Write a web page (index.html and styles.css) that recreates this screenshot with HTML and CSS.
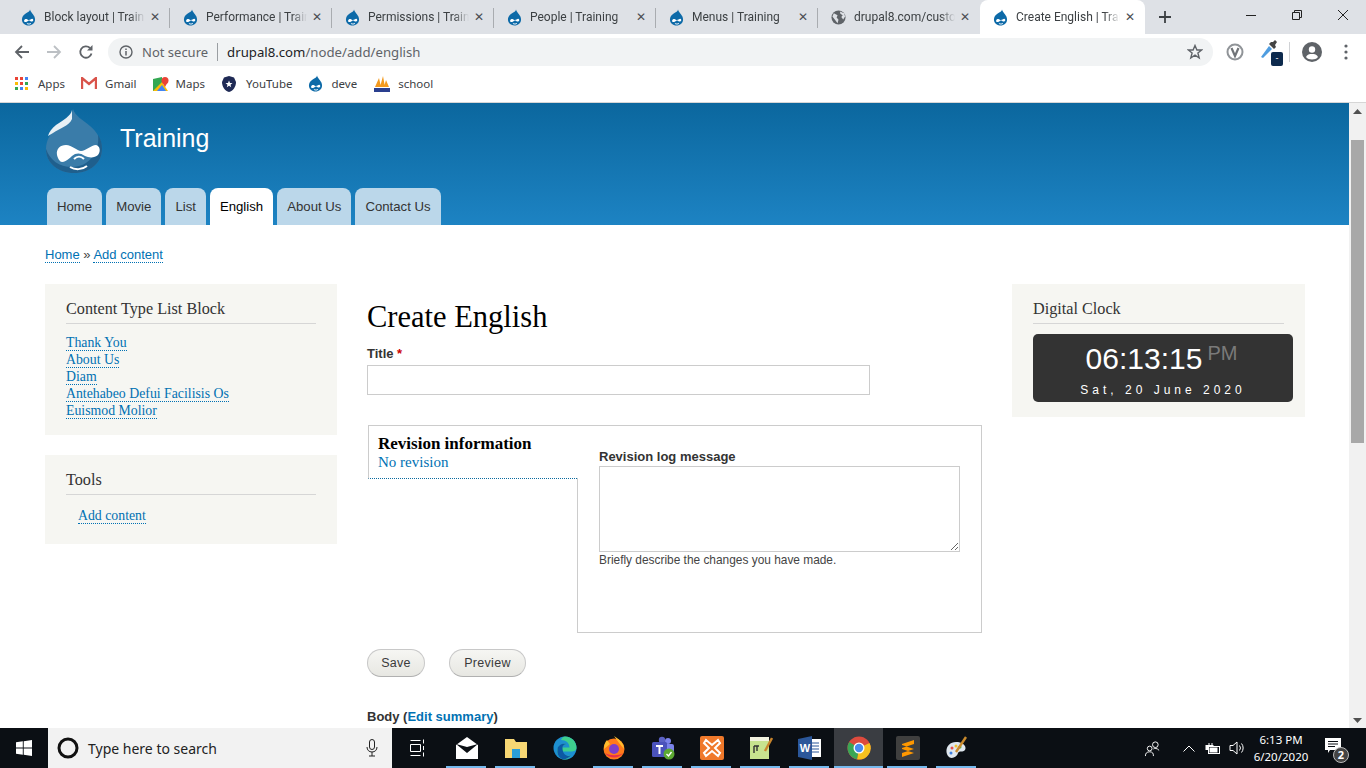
FILE: index.html
```html
<!DOCTYPE html>
<html lang="en">
<head>
<meta charset="utf-8">
<title>Create English | Training</title>
<link rel="stylesheet" href="styles.css">
</head>
<body>
<svg class="defs" width="0" height="0" aria-hidden="true">
  <defs>
    <symbol id="drop" viewBox="0 0 16 18">
      <path d="M9.6 .5C9.5 2.6 7.3 3.2 5 4.8 2.6 6.4 1 8.500 1 11.100 1 14.800 4.100 17.500 8 17.500S15 14.800 15 11.100C15 6.500 10.800 4.700 9.600 .5Z" fill="#0d6aa8"/>
      <path d="M3.300 12.600C3.300 11 4.800 10.300 5.800 10.500 6.800 10.700 7.600 11.700 8.500 11.700 9.600 11.700 10.800 10.300 12 10.300 13 10.300 13.200 11.500 13 12.200 12.700 13.200 11.500 13.600 10.500 13.200 9.800 12.900 9.300 12.300 8.300 12.300 7.300 12.300 6.800 13.800 5.300 13.800 4.200 13.800 3.300 13.500 3.300 12.600Z" fill="#fff"/>
      <path d="M6.300 15.300C7.500 16.200 9.500 16.200 10.600 15.300" stroke="#fff" fill="none"/>
    </symbol>
  </defs>
</svg>
<div class="screen">
  <div class="tabstrip">
    <div class="tab"><svg class="fav"><use href="#drop"/></svg><span class="tabtitle">Block layout | Training</span><span class="tabx">✕</span></div>
    <div class="tab"><svg class="fav"><use href="#drop"/></svg><span class="tabtitle">Performance | Training</span><span class="tabx">✕</span></div>
    <div class="tab"><svg class="fav"><use href="#drop"/></svg><span class="tabtitle">Permissions | Training</span><span class="tabx">✕</span></div>
    <div class="tab"><svg class="fav"><use href="#drop"/></svg><span class="tabtitle">People | Training</span><span class="tabx">✕</span></div>
    <div class="tab"><svg class="fav"><use href="#drop"/></svg><span class="tabtitle">Menus | Training</span><span class="tabx">✕</span></div>
    <div class="tab tab-last"><svg class="fav" viewBox="0 0 16 16"><circle cx="8" cy="8" r="7.500" fill="#5f6368"/><path d="M3 3.500 7 5.500 6 8 8 10.500 7 14 4 10 1.500 7ZM9.500 1.500 10 4 12.500 5.500 11 7.500 13 10 15 7 14 3.500Z" fill="#dee1e6"/></svg><span class="tabtitle">drupal8.com/custom-block</span><span class="tabx">✕</span></div>
    <div class="tab tab-active"><svg class="fav"><use href="#drop"/></svg><span class="tabtitle">Create English | Training</span><span class="tabx">✕</span></div>
    <svg class="newtab" viewBox="0 0 12 12"><path d="M6 0V12M0 6H12" stroke="#3c4043" stroke-width="1.800"/></svg>
    <div class="winbtns">
      <svg viewBox="0 0 12 12"><path d="M1 6.500H11" stroke="#222"/></svg>
      <svg viewBox="0 0 12 12"><path d="M1.500 3.500H8.500V10.500H1.500ZM3.500 3.500V1.500H10.500V8.500H8.500" stroke="#222" fill="none"/></svg>
      <svg viewBox="0 0 12 12"><path d="M1 1 11 11M11 1 1 11" stroke="#222"/></svg>
    </div>
  </div>

  <div class="toolbar">
    <svg class="navicon" viewBox="0 0 16 16"><path d="M15 8H2M8 2 2 8 8 14" stroke="#5f6368" stroke-width="1.800" fill="none"/></svg>
    <svg class="navicon" viewBox="0 0 16 16"><path d="M1 8H14M8 2 14 8 8 14" stroke="#bcc0c4" stroke-width="1.800" fill="none"/></svg>
    <svg class="navicon" viewBox="0 0 16 16"><path d="M13.500 9.500A5.700 5.700 0 1 1 12 4" stroke="#5f6368" stroke-width="1.800" fill="none"/><path d="M14.500 1V6.500H9Z" fill="#5f6368"/></svg>
    <div class="omnibox">
      <svg class="infoicon" viewBox="0 0 14 14"><circle cx="7" cy="7" r="6" stroke="#5f6368" stroke-width="1.400" fill="none"/><path d="M7 6V10.500M7 3.500V5" stroke="#5f6368" stroke-width="1.500"/></svg>
      <span class="notsecure">Not secure</span>
      <span class="urlsep"></span>
      <span class="url"><b>drupal8.com</b>/node/add/english</span>
      <svg class="star" viewBox="0 0 16 16"><path d="M8 1.500 9.900 6H14.700L10.900 9 12.200 14 8 11.200 3.800 14 5.100 9 1.300 6H6.100Z" stroke="#5f6368" stroke-width="1.400" fill="none"/></svg>
    </div>
    <svg class="ext ext-v" viewBox="0 0 18 18"><circle cx="9" cy="9" r="7.500" stroke="#909498" stroke-width="2" fill="none"/><path d="M5.500 5 9 13 12.500 5" stroke="#707478" stroke-width="2.200" fill="none"/></svg>
    <div class="ext ext-drop">
      <svg viewBox="0 0 18 18"><path d="M1 17 9 6 12 9 3 18Z" fill="#4f9de0"/><path d="M9 4 14 9 16 7 15 5 17 2 15 0 13 2 11 2Z" fill="#444"/></svg>
      <span class="extbadge">-</span>
    </div>
    <span class="toolsep"></span>
    <svg class="ext ext-user" viewBox="0 0 20 20"><circle cx="10" cy="10" r="10" fill="#5f6368"/><circle cx="10" cy="7.500" r="3.200" fill="#fff"/><path d="M4 15C5 12.500 7.500 12 10 12S15 12.500 16 15C14.500 16.800 12.500 17.500 10 17.500S5.500 16.800 4 15Z" fill="#fff"/></svg>
    <svg class="ext ext-menu" viewBox="0 0 4 16"><circle cx="2" cy="2" r="1.600" fill="#5f6368"/><circle cx="2" cy="8" r="1.600" fill="#5f6368"/><circle cx="2" cy="14" r="1.600" fill="#5f6368"/></svg>
  </div>

  <div class="bookmarks">
    <span class="bm bm-apps"><svg viewBox="0 0 13 13"><g fill="#ea4335"><rect width="3" height="3"/><rect x="5" width="3" height="3"/></g><rect x="10" width="3" height="3" fill="#4285f4"/><rect y="5" width="3" height="3" fill="#fbbc05"/><rect x="5" y="5" width="3" height="3" fill="#ea4335"/><rect x="10" y="5" width="3" height="3" fill="#34a853"/><rect y="10" width="3" height="3" fill="#34a853"/><rect x="5" y="10" width="3" height="3" fill="#4285f4"/><rect x="10" y="10" width="3" height="3" fill="#fbbc05"/></svg>Apps</span>
    <span class="bm bm-gmail"><svg viewBox="0 0 16 13"><path d="M1 12V1L8 7 15 1V12" stroke="#d9534a" stroke-width="2.400" fill="none"/></svg>Gmail</span>
    <span class="bm bm-maps"><svg viewBox="0 0 16 16"><path d="M0 3 9 1V15L0 15Z" fill="#34a853"/><path d="M0 15 9 6 15 15Z" fill="#fbbc05"/><path d="M4 15 9 9 13 15Z" fill="#4285f4"/><circle cx="12" cy="4.500" r="3.500" fill="#ea4335"/><path d="M9.500 6.500 12 11 14.500 6.500Z" fill="#ea4335"/></svg>Maps</span>
    <span class="bm bm-yt"><svg viewBox="0 0 16 16"><path d="M3 1.500 8 0 13 1.500 15 6C15 11 12 15 8 16 4 15 1 11 1 6Z" fill="#1f2a55"/><path d="M8 4.500 9 7H11.500L9.500 8.700 10.200 11.300 8 9.800 5.800 11.300 6.500 8.700 4.500 7H7Z" fill="#fff"/></svg>YouTube</span>
    <span class="bm bm-deve"><svg viewBox="0 0 16 18"><use href="#drop"/></svg>deve</span>
    <span class="bm bm-school"><svg viewBox="0 0 16 16"><path d="M1 11 5 2 7 11ZM6 11 9 0 11 11ZM10 11 12 4 15 11Z" fill="#f39a1f"/><path d="M0 12H16V16H0Z" fill="#2a3f8f"/></svg>school</span>
  </div>

  <div class="viewport">
    <div class="page">
      <header class="siteheader">
        <div class="branding">
          <svg class="logo" viewBox="0 0 58 66">
            <path d="M28 1C30 8 38 12 45 18 52 24 57 32 57 41 57 55 45 65 29 65 13 65 1 55 1 41 1 32 6 24 13 18 20 12 26 9 28 1Z" fill="#3a7ca9"/>
            <path d="M1 41C1 55 13 65 29 65S57 55 57 41C57 36 56 31 53 27 55 44 44 59 27 59 14 59 5 52 1 41Z" fill="#1f5f8d"/>
            <path d="M27 2C26 8 18 12 11 17 7 20 4 24 3 28L8 25C15 20 24 18 27 11Z" fill="#e8f0f5"/>
            <path d="M12 47C11 41 15 37 21 37 27 37 32 43 36 43 41 43 46 37 51 37 55 38 56 43 53 47 50 50 44 50 40 48 36 45 33 45 30 46 26 48 22 54 17 54 15 54 13 51 12 47Z" fill="#fff"/>
            <path d="M25 59C30 62 37 62 42 58M29 51C32 48 36 48 39 51" stroke="#fff" stroke-width="2" fill="none"/>
          </svg>
          <span class="sitename">Training</span>
        </div>
        <nav class="mainnav">
          <a class="navtab">Home</a>
          <a class="navtab">Movie</a>
          <a class="navtab">List</a>
          <a class="navtab navtab-active">English</a>
          <a class="navtab">About Us</a>
          <a class="navtab">Contact Us</a>
        </nav>
      </header>

      <div class="crumbs"><a class="dlink">Home</a> » <a class="dlink">Add content</a></div>

      <div class="columns">
        <aside class="side">
          <section class="block">
            <h2 class="blocktitle">Content Type List Block</h2>
            <ul class="linklist">
              <li><a class="dlink">Thank You</a></li>
              <li><a class="dlink">About Us</a></li>
              <li><a class="dlink">Diam</a></li>
              <li><a class="dlink">Antehabeo Defui Facilisis Os</a></li>
              <li><a class="dlink">Euismod Molior</a></li>
            </ul>
          </section>
          <section class="block">
            <h2 class="blocktitle">Tools</h2>
            <div class="toolslink"><a class="dlink">Add content</a></div>
          </section>
        </aside>

        <main class="main">
          <h1 class="pagetitle">Create English</h1>
          <label class="label label-title">Title <span class="req">*</span></label>
          <input class="textinput" type="text">
          <div class="vtabs">
            <div class="vtabmenu">
              <div class="vtabname">Revision information</div>
              <div class="vtabsummary">No revision</div>
            </div>
            <div class="vtabpane">
              <label class="label">Revision log message</label>
              <textarea class="textarea"></textarea>
              <div class="desc">Briefly describe the changes you have made.</div>
            </div>
          </div>
          <div class="actions">
            <button class="btn btn-save" type="button">Save</button>
            <button class="btn btn-preview" type="button">Preview</button>
          </div>
          <div class="label label-body">Body (<a class="plainlink">Edit summary</a>)</div>
          <div class="editortop"></div>
        </main>

        <aside class="side side-right">
          <section class="block block-clock">
            <h2 class="blocktitle">Digital Clock</h2>
            <div class="clock">
              <div class="clocktime">06:13:15<span class="clockampm">PM</span></div>
              <div class="clockdate">Sat, 20 June 2020</div>
            </div>
          </section>
        </aside>
      </div>
    </div>
    <div class="scrollbar">
      <svg class="sbarrow" viewBox="0 0 9 6"><path d="M4.500 0 9 5H0Z" fill="#505050"/></svg>
      <div class="sbthumb"></div>
      <svg class="sbarrow" viewBox="0 0 9 6"><path d="M4.500 6 9 1H0Z" fill="#505050"/></svg>
    </div>
  </div>

  <div class="taskbar">
    <div class="startbtn"><svg viewBox="0 0 16 16"><path d="M0 2.300 6.800 1.300V7.600H0ZM7.700 1.200 16 0V7.600H7.700ZM0 8.400H6.800V14.700L0 13.700ZM7.700 8.400H16V16L7.700 14.800Z" fill="#fff"/></svg></div>
    <div class="searchbox">
      <svg class="cortana" viewBox="0 0 22 22"><circle cx="11" cy="11" r="9" stroke="#111" stroke-width="3" fill="none"/></svg>
      <span class="searchtext">Type here to search</span>
      <svg class="mic" viewBox="0 0 12 18"><rect x="3.500" y=".5" width="5" height="10" rx="2.500" stroke="#222" fill="none"/><path d="M1 8C1 11 3 13 6 13S11 11 11 8M6 13V17M3 17H9" stroke="#222" fill="none"/></svg>
    </div>
    <div class="taskicons">
      <div class="ti ti-view"><svg viewBox="0 0 16 18"><path d="M.5 5.500H10.500V12.500H.5ZM.5 1.500H10.500M.5 16.500H10.500M13.500 .5V4.500M13.500 7V11M13.500 13.500V17.500" stroke="#fff" fill="none"/></svg></div>
      <div class="ti ti-on"><svg viewBox="0 0 24 24"><path d="M1 9 12 1 23 9V23H1Z" fill="#fff"/><path d="M1 8 12 17 23 8 12 11Z" fill="#0b0f14"/></svg></div>
      <div class="ti ti-on"><svg viewBox="0 0 24 24"><path d="M1 3H10L12 6H23V22H1Z" fill="#f7d774"/><path d="M8 13H16V22H8Z" fill="#2b9fd8"/></svg></div>
      <div class="ti"><svg viewBox="0 0 24 24"><circle cx="12" cy="12" r="11.500" fill="#1d8fd1"/><path d="M12 .5C18.500 .5 23.500 5.500 23.500 12 23.500 14.500 21 15.500 18 15.500H9.500C10 18.500 13 20.500 18 19.500 16 22 14 23.500 12 23.500 6 23.500 3.500 17 4.500 13 5.500 9 10 7 13.500 8 10.500 8.500 9.500 10 9.500 11.500H16.500C16.500 7 13 4 8 4 9 2 10 .5 12 .5Z" fill="#3ecf8e"/><path d="M4.500 13C5 9 9.500 7 13.500 8 10.500 8.500 9.500 10 9.500 12 9.500 18 13.500 21 18 19.500 15 23 10.500 24 8 22.500 5 20.500 4 17 4.500 13Z" fill="#0c59a4"/></svg></div>
      <div class="ti ti-on"><svg viewBox="0 0 24 24"><circle cx="12" cy="13" r="10.500" fill="#ff7a1a"/><path d="M12 0C17 3 22 7 22 13L17 7ZM2 13C2 9 3 6 5 4L8 8Z" fill="#ffbd2e"/><circle cx="12" cy="13" r="5" fill="#7d3fc9"/><path d="M3 17C6 22 16 24 21 17 17 20 8 20 3 17Z" fill="#e8304a"/></svg></div>
      <div class="ti ti-on"><svg viewBox="0 0 24 24"><circle cx="17" cy="5" r="3" fill="#7b83eb"/><circle cx="11" cy="4" r="3.200" fill="#5b61c4"/><rect x="13" y="8" width="10" height="10" rx="2" fill="#7b83eb"/><rect x="1" y="6" width="15" height="15" rx="1.500" fill="#4b53bc"/><path d="M5 10H12M8.500 10V18" stroke="#fff" stroke-width="2"/><circle cx="18" cy="18" r="5.500" fill="#5ca832"/><path d="M15.500 18 17.500 20 20.500 16" stroke="#fff" stroke-width="1.400" fill="none"/></svg></div>
      <div class="ti ti-on"><svg viewBox="0 0 24 24"><rect width="24" height="24" rx="2" fill="#f0792b"/><path d="M6 4 12 9 18 4 20 7 15 12 20 17 18 20 12 15 6 20 4 17 9 12 4 7Z" stroke="#fff" stroke-width="2" fill="none"/></svg></div>
      <div class="ti ti-on"><svg viewBox="0 0 24 24"><path d="M1 1H20V23H1Z" fill="#c7e38f"/><path d="M1 1H20V5H1Z" fill="#f2f2e0"/><path d="M5 10H10M5 10V17M8 10V15" stroke="#333" stroke-width="1.400"/><path d="M16 15 23 2" stroke="#c9852c" stroke-width="2.400"/></svg></div>
      <div class="ti ti-on"><svg viewBox="0 0 24 24"><path d="M11 3H23V21H11Z" fill="#fff"/><path d="M13 7H21M13 10H21M13 13H21M13 16H21" stroke="#2b579a"/><path d="M0 3 14 0V24L0 21Z" fill="#2b579a"/><text class="wordw" x="7" y="16" text-anchor="middle">W</text></svg></div>
      <div class="ti ti-active"><svg viewBox="0 0 24 24"><circle cx="12" cy="12" r="11.500" fill="#dd4b3e"/><path d="M12 12 22.500 7A11.500 11.500 0 0 1 10 23.300Z" fill="#f7c11f"/><path d="M12 12 10 23.300A11.500 11.500 0 0 1 2.200 6Z" fill="#3aa655"/><circle cx="12" cy="12" r="5.500" fill="#fff"/><circle cx="12" cy="12" r="4.200" fill="#4a8cf0"/></svg></div>
      <div class="ti ti-on"><svg viewBox="0 0 24 24"><rect width="24" height="24" rx="2" fill="#3f3f3f"/><path d="M18 4 6 8V12L18 8ZM6 9 18 13V17L6 13ZM18 13 6 17V21L18 17Z" fill="#ff9800"/></svg></div>
      <div class="ti ti-on"><svg viewBox="0 0 24 24"><path d="M3 20C-1 14 3 6 11 6 18 6 22 10 20 14 18 17 14 14 13 17 12 21 6 24 3 20Z" fill="#dfe7ee"/><circle cx="7" cy="12" r="1.500" fill="#e8504a"/><circle cx="11" cy="10" r="1.500" fill="#f2c230"/><circle cx="15" cy="11" r="1.500" fill="#4ab04a"/><circle cx="6" cy="17" r="1.500" fill="#3f7fe0"/><path d="M11 16 21 1" stroke="#c98a2c" stroke-width="2.400"/></svg></div>
    </div>
    <div class="tray">
      <svg class="tr tr-people" viewBox="0 0 18 18"><circle cx="12" cy="5" r="3" stroke="#fff" fill="none"/><circle cx="6" cy="9" r="2.500" stroke="#fff" fill="none"/><path d="M1.500 17C1.500 14 3 12.500 6 12.500S10 14 10 17M10 9.500C11 8.500 14 8.500 16 11" stroke="#fff" fill="none"/></svg>
      <svg class="tr tr-chev" viewBox="0 0 12 7"><path d="M.5 6.500 6 1 11.500 6.500" stroke="#fff" fill="none"/></svg>
      <svg class="tr tr-batt" viewBox="0 0 16 14"><path d="M4 2V4M7 2V4" stroke="#fff"/><rect x=".5" y="4" width="8" height="5" fill="#fff"/><rect x="3.500" y="5.500" width="11" height="7" stroke="#fff" fill="#0b0f14"/><rect x="4.500" y="6.500" width="8" height="5" fill="#fff"/></svg>
      <svg class="tr tr-vol" viewBox="0 0 16 16"><path d="M1 5.500H4L8 2V14L4 10.500H1Z" stroke="#fff" fill="none"/><path d="M10.500 5.500A4 4 0 0 1 10.500 10.500M12.500 3.500A7 7 0 0 1 12.500 12.500" stroke="#fff" fill="none"/></svg>
      <div class="trayclock"><div>6:13 PM</div><div>6/20/2020</div></div>
      <div class="notif">
        <svg viewBox="0 0 16 15"><path d="M0 0H16V12H5L3 15V12H0Z" fill="#fff"/><path d="M3 3.500H13M3 6H13M3 8.500H10" stroke="#0b0f14"/></svg>
        <span class="notifbadge">2</span>
      </div>
    </div>
  </div>
</div>
</body>
</html>
```

FILE: styles.css
```css
* { box-sizing: border-box; }
html, body { margin: 0; padding: 0; height: 100%; overflow: hidden; }
body { font-family: "Liberation Sans", Arial, sans-serif; background: #fff; }
.defs { position: absolute; }
.screen { width: 1366px; height: 768px; display: flex; flex-direction: column; overflow: hidden; }

/* Browser chrome */
.tabstrip { height: 34px; flex: none; background: #dee1e6; display: flex; align-items: center; padding-left: 8px; font-family: Roboto, sans-serif; font-size: 12px; color: #3c4043; }
.tab { width: 162px; height: 34px; display: flex; align-items: center; padding: 0 9px 0 13px; position: relative; flex: none; }
.tab::after { content: ""; position: absolute; right: 0; top: 8px; height: 20px; width: 1px; background: #a9acb0; }
.tab-last::after, .tab-active::after { display: none; }
.tab-active { background: #fff; border-radius: 8px 8px 0 0; width: 165px; }
.fav { width: 15px; height: 17px; flex: none; margin-right: 8px; }
.tabtitle { flex: 1; white-space: nowrap; overflow: hidden; -webkit-mask-image: linear-gradient(90deg, #000 85%, transparent 100%); mask-image: linear-gradient(90deg, #000 85%, transparent 100%); }
.tabx { width: 12px; margin-left: 4px; font-size: 12px; font-weight: 700; color: #4a4d51; text-align: center; font-family: "DejaVu Sans", sans-serif; }
.newtab { width: 12px; height: 12px; margin-left: 14px; flex: none; }
.winbtns { margin-left: auto; display: flex; align-items: center; gap: 34px; padding-right: 17px; margin-top: -4px; }
.winbtns svg { width: 12px; height: 12px; display: block; }

.toolbar { height: 34px; flex: none; background: #fff; display: flex; align-items: center; padding: 2px 0 0 14px; }
.navicon { width: 16px; height: 16px; margin-right: 16px; flex: none; }
.omnibox { width: 1105px; height: 28px; margin-left: -2px; border-radius: 14px; background: #f1f3f4; display: flex; align-items: center; padding: 0 10px 0 11px; font-family: "Noto Sans", sans-serif; font-size: 13.2px; color: #5f6368; }
.infoicon { width: 14px; height: 14px; margin-right: 9px; }
.notsecure { font-size: 13px; white-space: nowrap; }
.urlsep { width: 1px; height: 18px; background: #9a9ea2; margin: 0 9px; }
.url { white-space: nowrap; }
.url b { font-weight: 400; color: #202124; }
.star { width: 16px; height: 16px; margin-left: auto; }
.ext { flex: none; }
.ext-v { width: 18px; height: 18px; margin-left: 13px; }
.ext-drop { width: 20px; height: 24px; margin-left: 16px; position: relative; }
.ext-drop svg { width: 18px; height: 18px; display: block; }
.extbadge { position: absolute; right: -3px; bottom: -2px; width: 12px; height: 14px; border-radius: 2px; background: #0d2a4d; color: #fff; font-size: 9px; line-height: 13px; text-align: center; }
.toolsep { width: 1px; height: 20px; background: #d0d2d5; margin-left: 9px; flex: none; }
.ext-user { width: 20px; height: 20px; margin-left: 12px; }
.ext-menu { width: 4px; height: 16px; margin-left: 22px; }

.bookmarks { height: 35px; flex: none; background: #fff; border-bottom: 1px solid #d6d6d6; display: flex; align-items: center; padding-left: 15px; padding-bottom: 3px; font-family: "Noto Sans", sans-serif; font-size: 11.5px; color: #3c4043; }
.bm { display: flex; align-items: center; white-space: nowrap; }
.bm svg { flex: none; margin-right: 8px; }
.bm-apps svg { width: 13px; height: 13px; margin-right: 10px; }
.bm-gmail { margin-left: 16px; }
.bm-gmail svg { width: 16px; height: 13px; }
.bm-maps { margin-left: 16px; }
.bm-maps svg { width: 16px; height: 16px; margin-right: 7px; }
.bm-yt { margin-left: 16px; }
.bm-yt svg { width: 16px; height: 16px; margin-right: 9px; }
.bm-deve { margin-left: 16px; }
.bm-deve svg { width: 15px; height: 17px; }
.bm-school { margin-left: 17px; }
.bm-school svg { width: 16px; height: 16px; }

/* Page */
.viewport { flex: 1; min-height: 0; display: flex; overflow: hidden; }
.page { flex: 1; min-width: 0; overflow: hidden; }
.scrollbar { width: 17px; flex: none; background: #f1f1f1; display: flex; flex-direction: column; align-items: center; }
.sbarrow { width: 9px; height: 6px; margin: 6px 0 5px; flex: none; }
.sbthumb { width: 13px; height: 303px; background: #a8a8a8; margin-top: 20px; margin-bottom: auto; }

.siteheader { height: 122px; background: linear-gradient(#0b679e, #1d83c3); padding-left: 45px; display: flex; flex-direction: column; }
.branding { height: 85px; display: flex; align-items: flex-start; }
.logo { width: 58px; height: 66px; margin-top: 5px; flex: none; }
.sitename { color: #fff; font-size: 25px; line-height: 30px; margin-left: 17px; margin-top: 20px; }
.mainnav { display: flex; gap: 4px; padding-left: 2px; }
.navtab { height: 37px; padding: 0 10px; border-radius: 8px 8px 0 0; background: #bbd7ea; color: #333; font-size: 13.2px; line-height: 37px; }
.navtab-active { background: #fff; color: #000; }

.crumbs { margin: 21px 0 0 45px; font-size: 13px; line-height: 17px; color: #444; }
.dlink { color: #0071b3; border-bottom: 1px dotted #0071b3; }

.columns { display: flex; align-items: flex-start; padding: 21px 0 0 45px; gap: 30px; }
.side { width: 292px; flex: none; display: flex; flex-direction: column; gap: 20px; }
.side-right { width: 293px; }
.block { background: #f6f6f2; padding: 16px 21px 16px; font-family: "Liberation Serif", serif; }
.blocktitle { margin: 0 0 10px; padding-bottom: 4px; width: 250px; border-bottom: 1px solid #d6d6d6; font-size: 16.2px; line-height: 19px; font-weight: 400; color: #333; }
.linklist { margin: 0; padding: 0; list-style: none; font-size: 13.800px; line-height: 17px; }
.toolslink { padding: 2px 0 4px 12px; font-size: 13.800px; line-height: 17px; }
.block-clock { padding-bottom: 15px; }
.block-clock .blocktitle { width: 251px; }

.main { width: 615px; flex: none; padding-top: 15px; }
.pagetitle { margin: 0 0 11px; font-family: "Liberation Serif", serif; font-weight: 400; font-size: 30.500px; line-height: 36px; color: #000; }
.label { display: block; font-size: 13px; line-height: 15px; font-weight: 700; color: #333; }
.req { color: #c00; }
.textinput { display: block; width: 503px; height: 30px; margin-top: 4px; border: 1px solid #ccc; background: #fff; }
.vtabs { display: flex; width: 614px; margin: 30px 0 0 1px; height: 208px; align-items: flex-start; }
.vtabmenu { width: 209px; height: 54px; flex: none; background: #fff; border: 1px solid #ccc; border-width: 1px 0 0 1px; border-bottom: 1px dotted #0a6a9f; padding: 8px 9px; font-family: "Liberation Serif", serif; }
.vtabname { font-size: 17px; line-height: 19px; font-weight: 700; color: #000; white-space: nowrap; }
.vtabsummary { font-size: 15px; line-height: 18px; color: #0071b3; }
.vtabpane { flex: 1; height: 208px; border: 1px solid #ccc; border-left: 0; padding: 23px 0 0 22px; position: relative; }
.vtabpane::before { content: ""; position: absolute; left: 0; top: 52px; bottom: 0; width: 1px; background: #ccc; }
.textarea { display: block; width: 361px; height: 86px; margin-top: 2px; border: 1px solid #ccc; background: #fff; }
.desc { margin-top: 1px; font-size: 11.900px; line-height: 15px; color: #444; }
.actions { display: flex; gap: 24px; margin-top: 16px; }
.btn { height: 28px; padding: 0; border-radius: 14px; border: 1px solid #c8c8c8; border-bottom-color: #b0b0b0; background: linear-gradient(#f6f6f3, #e7e7e2); color: #3a3a3a; font-family: "Liberation Sans", sans-serif; font-size: 12.500px; letter-spacing: .3px; }
.btn-save { width: 58px; }
.btn-preview { width: 77px; }
.label-body { margin-top: 32px; }
.plainlink { color: #0071b3; }
.editortop { height: 4px; margin-top: 4px; border-top: 1px solid #ccc; }

.clock { width: 260px; height: 68px; margin-top: 1px; border-radius: 5px; background: #333; color: #fff; text-align: center; padding-top: 8px; font-family: "Liberation Sans", sans-serif; }
.clocktime { font-size: 30px; line-height: 34px; padding-right: 3px; }
.clockampm { font-size: 20px; line-height: 1; color: #7a7a7a; margin-left: 5px; vertical-align: 9px; }
.clockdate { font-size: 12px; line-height: 14px; letter-spacing: 4px; margin-top: 7px; }

/* Taskbar */
.taskbar { height: 40px; flex: none; background: #0b0f14; display: flex; align-items: stretch; color: #fff; font-family: "Noto Sans", sans-serif; }
.startbtn { width: 48px; display: flex; align-items: center; justify-content: center; }
.startbtn svg { width: 16px; height: 16px; }
.searchbox { width: 344px; background: #f2f2f2; display: flex; align-items: center; padding: 0 14px 0 9px; color: #222; font-size: 14px; }
.cortana { width: 22px; height: 22px; }
.searchtext { margin-left: 9px; }
.mic { width: 12px; height: 18px; margin-left: auto; }
.taskicons { display: flex; padding-left: 1px; }
.ti { width: 49px; display: flex; align-items: center; justify-content: center; position: relative; }
.ti svg { width: 24px; height: 24px; }
.ti-view svg { width: 16px; height: 18px; }
.ti-on::after, .ti-active::after { content: ""; position: absolute; left: 4px; right: 5px; bottom: 0; height: 2px; background: #76b9ed; }
.ti-active { background: #3a3d42; }
.ti-active::after { left: 0; right: 0; }
.wordw { font-family: "Liberation Sans", sans-serif; font-size: 11px; font-weight: 700; fill: #fff; }
.tray { margin-left: auto; display: flex; align-items: center; font-size: 11.500px; }
.tr { flex: none; }
.tr-people { width: 17px; height: 17px; }
.tr-chev { width: 12px; height: 7px; margin-left: 22px; }
.tr-batt { width: 16px; height: 14px; margin-left: 10px; }
.tr-vol { width: 16px; height: 16px; margin-left: 8px; }
.trayclock { width: 70px; margin-left: 1px; text-align: center; line-height: 17px; }
.notif { width: 32px; margin-left: 5px; margin-right: 13px; position: relative; height: 30px; }
.notif svg { width: 16px; height: 15px; position: absolute; left: 4px; top: 5px; }
.notifbadge { position: absolute; left: 12px; top: 14px; width: 16px; height: 16px; border-radius: 50%; background: #444; border: 1px solid #bbb; color: #fff; font-size: 11px; line-height: 14px; text-align: center; font-weight: 700; }
```
